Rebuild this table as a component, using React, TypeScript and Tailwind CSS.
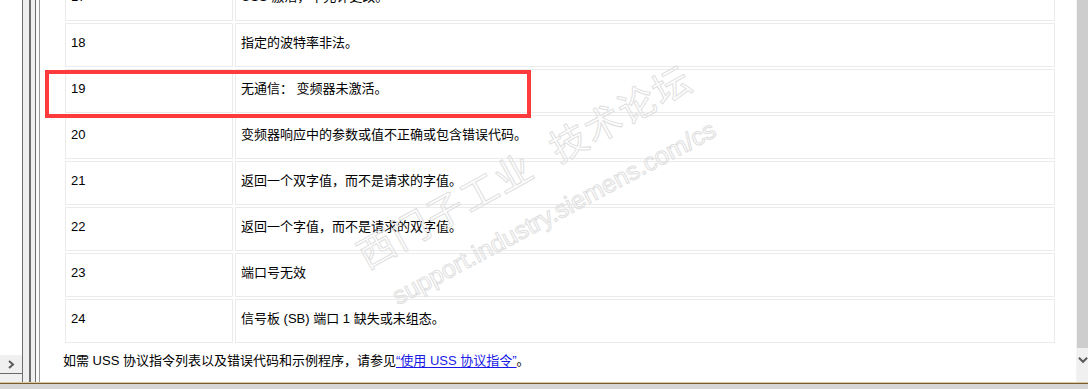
import React from 'react';

const rows = [
  { code: '17', text: 'USS 激活，不允许更改。' },
  { code: '18', text: '指定的波特率非法。' },
  { code: '19', text: '无通信： 变频器未激活。' },
  { code: '20', text: '变频器响应中的参数或值不正确或包含错误代码。' },
  { code: '21', text: '返回一个双字值，而不是请求的字值。' },
  { code: '22', text: '返回一个字值，而不是请求的双字值。' },
  { code: '23', text: '端口号无效' },
  { code: '24', text: '信号板 (SB) 端口 1 缺失或未组态。' },
];

const App = () => {
  return (
    <div className="w-[1088px] h-[389px] overflow-hidden flex flex-col bg-white text-[13px] text-black font-['Liberation_Sans','Noto_Sans_CJK_SC',sans-serif]">
      <div className="h-[382px] flex">
        {/* left pane */}
        <div className="w-[22px] flex flex-col">
          <div className="flex-1 bg-white" />
          <div className="h-[19px] bg-[#f0f0f0] flex items-center justify-center border-b border-[#6a6a6a]">
            <svg width="7" height="9" viewBox="0 0 7 9">
              <polyline points="1,1 5,4.5 1,8" fill="none" stroke="#5a5a5a" strokeWidth="2" />
            </svg>
          </div>
          <div className="h-[8px] bg-[#f0f0f0]" />
        </div>

        {/* splitter */}
        <div className="w-[18px] flex">
          <div className="w-[1px] bg-[#6e6e6e]" />
          <div className="w-[6px] bg-[#efefef]" />
          <div className="w-[2px] bg-[#6e6e6e]" />
          <div className="w-[4px] bg-[#f0f0f0]" />
          <div className="w-[1px] bg-[#6e6e6e]" />
          <div className="w-[3px] bg-[#fafafa]" />
          <div className="w-[1px] bg-[#9a9a9a]" />
        </div>

        {/* content */}
        <div className="relative flex-1 overflow-hidden bg-white">
          <div className="-mt-[23px] ml-[25px] w-[990px]">
            <div className="grid grid-cols-[168px_820px] gap-[2px]">
              {rows.map((r) => (
                <React.Fragment key={r.code}>
                  <div className="h-[44px] border border-[#ebebeb] px-[5px] pt-[9px] leading-[20px]">{r.code}</div>
                  <div className="h-[44px] border border-[#ebebeb] px-[5px] pt-[9px] leading-[20px]">{r.text}</div>
                </React.Fragment>
              ))}
            </div>
          </div>
          <p className="mt-[8px] ml-[23px] leading-[20px]">
            如需 USS 协议指令列表以及错误代码和示例程序，请参见
            <a className="text-[#1a1ae6] underline underline-offset-2">“使用 USS 协议指令”</a>。
          </p>

          {/* highlight box */}
          <div className="absolute left-[5px] top-[70px] w-[486px] h-[48px] border-[4px] border-[#fd3b3b]" />

          {/* watermark */}
          <div className="absolute left-[330px] top-[238px] origin-bottom-left -rotate-[29deg] whitespace-nowrap text-[37px] leading-none text-transparent [-webkit-text-stroke:1px_#e0e0e0] tracking-[2px]">
            西门子工业&nbsp;&nbsp;技术论坛
          </div>
          <div className="absolute left-[360px] top-[284px] origin-bottom-left -rotate-[28deg] whitespace-nowrap text-[25px] leading-none text-transparent [-webkit-text-stroke:1px_#e0e0e0]">
            support.industry.siemens.com/cs
          </div>
        </div>

        {/* vertical scrollbar */}
        <div className="w-[12px] flex flex-col border-l border-[#f4f4f4]">
          <div className="h-[348px] bg-[#cdcdcd]" />
          <div className="flex-1 bg-[#f0f0f0] flex items-start pt-[8px] pl-[1px]">
            <svg width="11" height="8" viewBox="0 0 11 8">
              <polyline points="1,1.5 5.5,6 10,1.5" fill="none" stroke="#5a5a5a" strokeWidth="2.2" />
            </svg>
          </div>
        </div>
      </div>
      <div className="h-[1px] bg-[#d8c9ad]" />
      <div className="h-[1px] bg-[#7b5a2c]" />
      <div className="flex-1 bg-[#d6d6d6]" />
    </div>
  );
};

export default App;
